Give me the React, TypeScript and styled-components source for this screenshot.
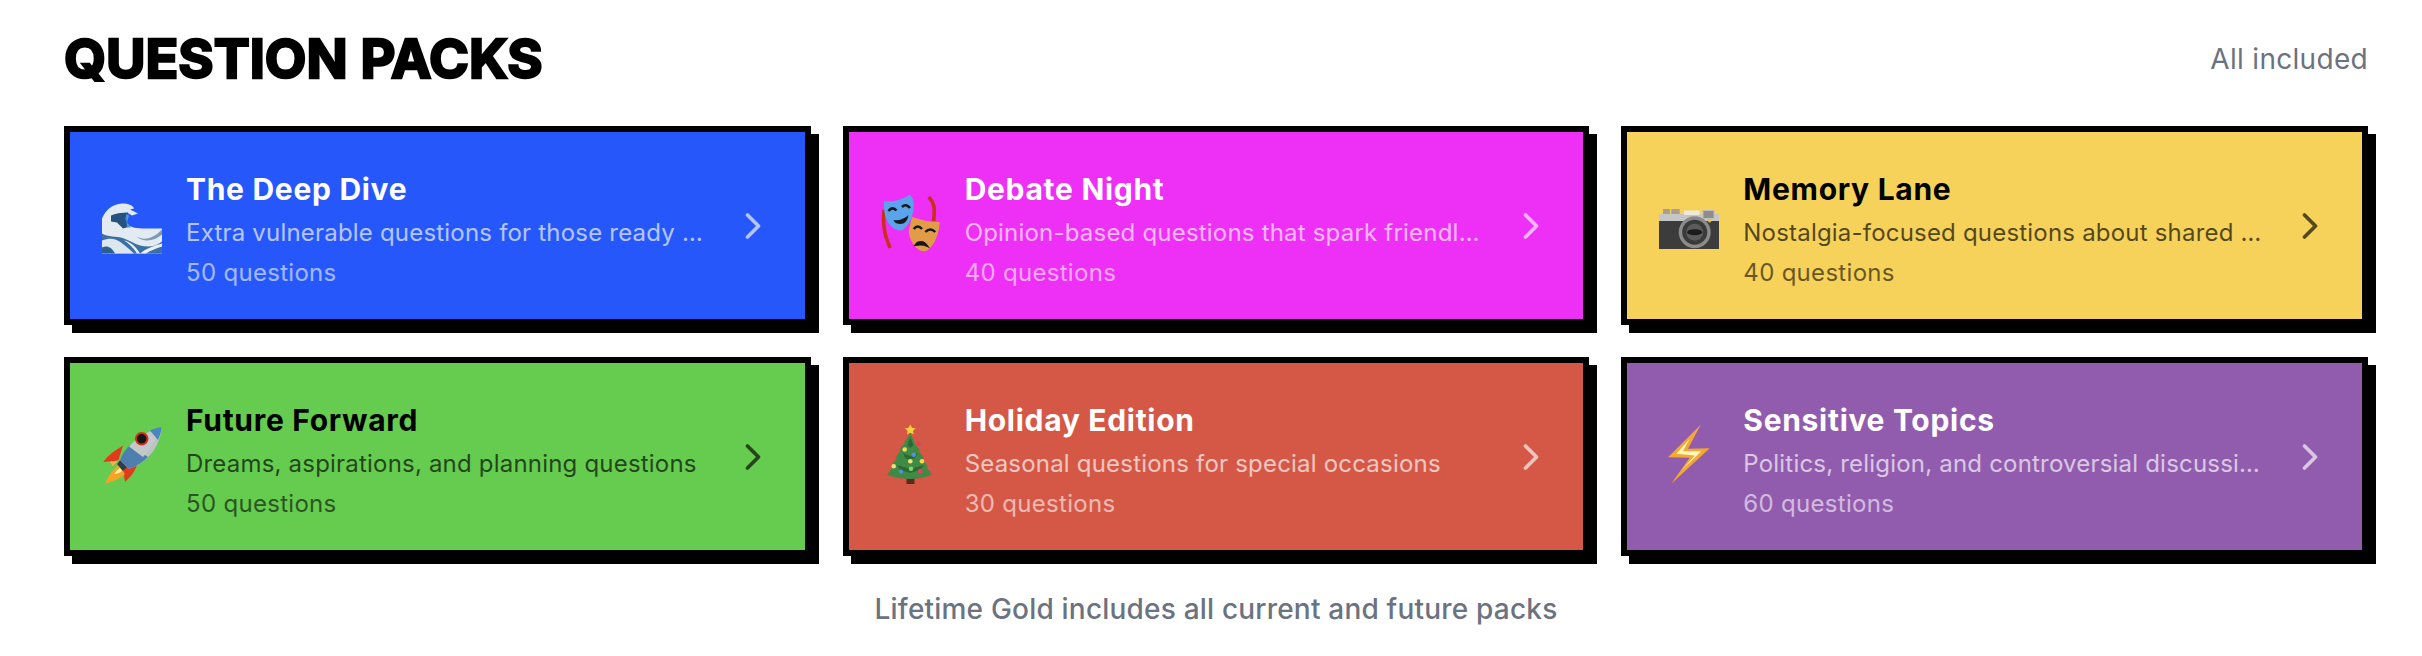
import React from "react";
import styled, { createGlobalStyle } from "styled-components";
import { ChevronRight } from "lucide-react";

const Global = createGlobalStyle`
  html, body { margin: 0; padding: 0; background: #fff; }
  body { font-family: "Inter", "Liberation Sans", sans-serif; }
`;

const Page = styled.div`
  box-sizing: border-box;
  width: 2422px;
  height: 656px;
  padding: 24px 54px 0 64px;
  overflow: hidden;
`;
const Header = styled.header`
  display: flex;
  align-items: center;
  justify-content: space-between;
  height: 70px;
  margin-bottom: 32px;
`;
const Title = styled.h2`
  margin: 0;
  font-family: "Inter", sans-serif;
  font-weight: 700;
  font-size: 54px;
  line-height: 70px;
  letter-spacing: 0;
  -webkit-text-stroke: 2.5px #000;
  stroke-linejoin: round;
  color: #000;
`;
const Included = styled.span`
  font-size: 28px;
  letter-spacing: 0.3px;
  color: #6b7280;
`;
const Grid = styled.div`
  display: grid;
  grid-template-columns: repeat(3, minmax(0, 1fr));
  gap: 32px;
`;
const Card = styled.div<{ $bg: string; $fg: string }>`
  box-sizing: border-box;
  height: 199px;
  display: flex;
  align-items: center;
  gap: 24px;
  padding: 0 32px;
  border: 6px solid #000;
  box-shadow: 8px 8px 0 #000;
  background: ${(p) => p.$bg};
  color: ${(p) => p.$fg};
`;
const Art = styled.svg`
  flex: none;
  width: 60px;
  height: 60px;
  overflow: visible;
`;
const Body = styled.div`
  flex: 1;
  min-width: 0;
  padding-top: 6px;
`;
const Name = styled.div`
  font-size: 30px;
  line-height: 40px;
  font-weight: 700;
  letter-spacing: 0.7px;
`;
const Desc = styled.div`
  font-size: 24px;
  line-height: 36px;
  margin-top: 6px;
  letter-spacing: 0.2px;
  opacity: 0.66;
  white-space: nowrap;
  overflow: hidden;
  text-overflow: ellipsis;
`;
const Count = styled.div`
  font-size: 24px;
  line-height: 32px;
  margin-top: 6px;
  letter-spacing: 0.3px;
  opacity: 0.58;
`;
const Chevron = styled(ChevronRight)`
  flex: none;
  margin: 0 -2px;
  opacity: 0.65;
`;
const Footer = styled.p`
  margin: 33px 0 0;
  text-align: center;
  font-size: 28px;
  line-height: 40px;
  font-weight: 500;
  letter-spacing: 0.2px;
  color: #6b7280;
`;

const Wave = () => (
  <Art viewBox="0 0 60 60">
    <g transform="translate(0 7.5)">
      <path d="M0 50V15C4 6 10 1 20 0c7 0 11 2 12 5l-4 1 8 4-6 2-5-3-2 6 4 7c6 4 18 3 33 3v25z" fill="#e3ebf2" />
      <path d="M9 12c4-2 10-3 17-3l-3 6 5 8-7 2-6-6-6-1z" fill="#26527f" />
      <path d="M24 11l3 1-2 7 4 5h-4z" fill="#4d9be0" />
      <path d="M0 30c6 4 14 2 22 5 8 3 14 8 24 8 6 0 10-2 14-5v12H0z" fill="#3c6fa3" />
      <path d="M34 33c8 4 16 3 26-7v5c-8 7-18 8-26 2z" fill="#7d9ab8" />
      <path d="M0 37c8-3 14-2 19 2 5 4 9 7 13 11H0z" fill="#dce6ef" />
      <path d="M0 44c5-2 9-1 13 6H0z" fill="#2d5f93" />
      <path d="M38 50c6-5 14-8 22-10v3c-6 2-12 4-16 7zM22 37c6 1 12 6 16 13h-3c-3-5-8-10-13-13z" fill="#eaf0f5" />
    </g>
  </Art>
);
const Masks = () => (
  <Art viewBox="0 0 60 60">
    <path d="M3 14c-1 10 0 20 2 27l4 11" stroke="#c8301c" strokeWidth="3.6" fill="none" />
    <path d="M47.7 1c3 3 5 7 5.400 11s0 9-.5 13" stroke="#c8301c" strokeWidth="3.6" fill="none" />
    <path d="M2.700 5.200C12 6 21 4 28.700-1.500c3 3 4 6 4 11 0 9-4 20-11.700 25C13 35 6 28 4 19 3 14 2.700 9 2.700 5.200z" fill="#5ba3ea" />
    <path d="M31 21c9 3 18 5 27.700 5-.5 10-4 22-12 28-3 2-7 1.500-10-1-5-4-8.700-11-9-18.500 1.500-5 2-9 3.300-13.500z" fill="#e29c48" />
    <path d="M7.500 15q4-5 8-.5M21 11q4-4 8 1" stroke="#15181c" strokeWidth="2.600" fill="none" />
    <path d="M12.500 24c5 1 11-1 15-5-1 6-4 9-8 9-3 0-6-1-7-4z" fill="#15181c" />
    <path d="M32.700 33q4-5 8.300 0M44.300 36q5-5 10 0" stroke="#15181c" strokeWidth="2.400" fill="none" />
    <path d="M34.500 49c3-4 8-4 11.500.8-3-1.300-7-1.500-11.500-.8z" stroke="#15181c" strokeWidth="2" fill="#15181c" />
  </Art>
);
const Camera = () => (
  <Art viewBox="0 0 60 60">
    <rect x="4" y="13" width="7" height="6" fill="#a89f8c" />
    <rect x="12.300" y="13" width="8.400" height="6" fill="#a89f8c" />
    <rect x="0" y="18" width="60" height="8" fill="#c6c6c6" />
    <rect x="0" y="25" width="60" height="28" fill="#3c3c3c" />
    <rect x="25" y="14.500" width="15.700" height="4.500" fill="#efe9dc" />
    <rect x="44" y="14.500" width="11" height="8" fill="#8c8c8c" stroke="#bdbdbd" strokeWidth="1" />
    <circle cx="35.700" cy="36.200" r="16" fill="#8b8b8b" />
    <circle cx="35.700" cy="36.200" r="12.500" fill="#3a3a3a" />
    <circle cx="35.700" cy="36.200" r="8.500" fill="#5b5b5b" />
    <ellipse cx="35.700" cy="36.200" rx="7.500" ry="3" fill="#1b1b1b" />
    <circle cx="50.700" cy="25" r="1.600" fill="#eec02e" />
  </Art>
);
const Rocket = () => (
  <Art viewBox="0 0 60 60">
    <path d="M21 18.500C14 23 6 28 1.300 35l15-1.500z" fill="#e5391c" />
    <path d="M36.300 31.800C36 40 30 49 23 55l-2-13z" fill="#e5391c" />
    <path d="M8 35l8-1.500-5 6z" fill="#f6b24a" />
    <path d="M16.300 38.500C11 42 6 49 3 56.800c7-2 15-5 20-9.800z" fill="#f6a328" />
    <path d="M12 47c2-3 4-5 6-6l2 3c-2 2-5 3-8 3z" fill="#fff2a0" />
    <path d="M15 37l4-5 7 7-5 5z" fill="#2f3d4c" />
    <path d="M18 33C24 19 38 6 59.700 0 58 20 46 35 27 42z" fill="#bcc2c5" />
    <path d="M18 33l9 9c8-3 14-7 19-12L28 18c-4 4-8 9-10 15z" fill="#4f7fae" />
    <path d="M27 19.500C33 14 40 8 48 5l8 2c-4 9-9 17-15 23z" fill="#c3c8cb" />
    <path d="M48 3.500c4-2 8-3 11.700-3.500-.5 4-1.700 9-3.700 13z" fill="#4c86c0" />
    <circle cx="39.700" cy="11.800" r="5.800" fill="#161616" stroke="#d92c1d" strokeWidth="2" />
  </Art>
);
const Tree = () => (
  <Art viewBox="0 0 60 60">
    <rect x="25.500" y="49" width="8" height="8" fill="#5a2c1b" />
    <path d="M29.300 6 34 16l-1.500-.5L39 23l-2-.5 6 9-2-.5 6 9-2-.5 6 8.500-4 1c-5 2-13 3-18 3s-14-1-19-3l-4-1 6-8.500-2 .5 6-9-2 .5 6-9-2 .5 6.500-7.500-1.500.5z" fill="#3f8a45" />
    <path d="M29.300 10l3 8-3 3-3-3zM22 26l7 3 8-3-3 5-5 2-5-2zM16 38l13 4 14-4-4 5-10 3-10-3z" fill="#2c6a35" />
    <path d="m29.300-2.500 1.700 3.300 3.700.5-2.700 2.600.7 3.700-3.400-1.800-3.400 1.800.7-3.700-2.700-2.600 3.700-.5z" fill="#f6cd3c" />
    <circle cx="37.700" cy="16.800" r="2.100" fill="#d8455d" /><circle cx="23.700" cy="22.500" r="2.300" fill="#f5dc4e" />
    <circle cx="32.700" cy="27.800" r="2.300" fill="#4f93da" /><circle cx="29.300" cy="34.200" r="2.300" fill="#f3e07a" />
    <circle cx="41" cy="34.200" r="2.300" fill="#f5dc4e" /><circle cx="12.700" cy="39.200" r="2.300" fill="#f3e07a" />
    <circle cx="20" cy="44.500" r="2.100" fill="#4f93da" /><circle cx="30" cy="41.800" r="2.300" fill="#7fd16f" />
    <circle cx="39.300" cy="44.200" r="2.500" fill="#d8455d" />
  </Art>
);
const Bolt = () => (
  <Art viewBox="0 0 60 60">
    <path d="M41.700-2.200 9 30.200l21.700.6-18.400 26 38.400-35.600L29 21.800z" fill="#f2a832" />
    <path d="M30.700 11.800 17.300 26.800l18.400 1.700-13.400 15 20-19.300-18.300 0z" fill="#fff7b8" />
  </Art>
);

const packs = [
  { name: "The Deep Dive", desc: "Extra vulnerable questions for those ready to go deeper", n: 50, bg: "#2557fb", fg: "#fff", Icon: Wave },
  { name: "Debate Night", desc: "Opinion-based questions that spark friendly debate", n: 40, bg: "#ee2ff5", fg: "#fff", Icon: Masks },
  { name: "Memory Lane", desc: "Nostalgia-focused questions about shared memories", n: 40, bg: "#f7d25a", fg: "#000", Icon: Camera },
  { name: "Future Forward", desc: "Dreams, aspirations, and planning questions", n: 50, bg: "#66cc4f", fg: "#000", Icon: Rocket },
  { name: "Holiday Edition", desc: "Seasonal questions for special occasions", n: 30, bg: "#d55846", fg: "#fff", Icon: Tree },
  { name: "Sensitive Topics", desc: "Politics, religion, and controversial discussions", n: 60, bg: "#925cae", fg: "#fff", Icon: Bolt },
];

export default function App() {
  return (
    <Page>
      <Global />
      <Header>
        <Title>QUESTION PACKS</Title>
        <Included>All included</Included>
      </Header>
      <Grid>
        {packs.map(({ name, desc, n, bg, fg, Icon }) => (
          <Card key={name} $bg={bg} $fg={fg}>
            <Icon />
            <Body>
              <Name>{name}</Name>
              <Desc>{desc}</Desc>
              <Count>{n} questions</Count>
            </Body>
            <Chevron size={44} strokeWidth={2} />
          </Card>
        ))}
      </Grid>
      <Footer>Lifetime Gold includes all current and future packs</Footer>
    </Page>
  );
}
